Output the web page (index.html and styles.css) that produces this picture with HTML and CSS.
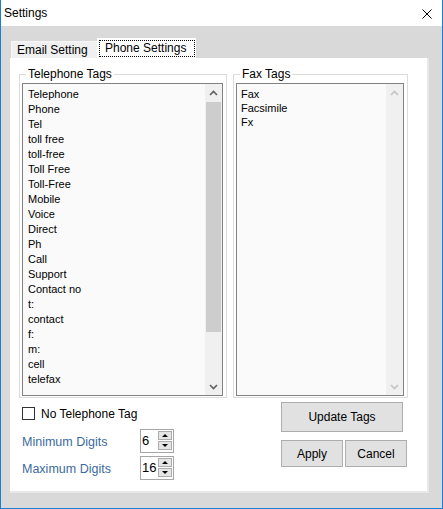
FILE: index.html
```html
<!DOCTYPE html>
<html>
<head>
<meta charset="utf-8">
<link rel="stylesheet" href="styles.css">
</head>
<body>
<div class="window">
  <div class="titlebar">
    <span class="title">Settings</span>
    <svg class="close" width="10" height="10" viewBox="0 0 10 10"><path d="M0.5 0.5 L9.5 9.5 M9.5 0.5 L0.5 9.5" stroke="#000" stroke-width="1" fill="none"/></svg>
  </div>
  <div class="client">
    <div class="tabs">
      <div class="tab">Email Setting</div>
      <div class="tab active"><span class="focus">Phone Settings</span></div>
    </div>
    <div class="panel">
      <div class="groups">
        <fieldset class="group g-tel">
          <legend>Telephone Tags</legend>
          <div class="listbox lb-tel">
            <ul class="items">
              <li>Telephone</li><li>Phone</li><li>Tel</li><li>toll free</li><li>toll-free</li>
              <li>Toll Free</li><li>Toll-Free</li><li>Mobile</li><li>Voice</li><li>Direct</li>
              <li>Ph</li><li>Call</li><li>Support</li><li>Contact no</li><li>t:</li>
              <li>contact</li><li>f:</li><li>m:</li><li>cell</li><li>telefax</li>
            </ul>
            <div class="vscroll">
              <div class="sarrow"><svg width="9" height="6" viewBox="0 0 9 6"><polyline points="1,5 4.5,1.5 8,5" fill="none" stroke="#606060" stroke-width="1.6"/></svg></div>
              <div class="track"><div class="thumb"></div></div>
              <div class="sarrow"><svg width="9" height="6" viewBox="0 0 9 6"><polyline points="1,1 4.5,4.5 8,1" fill="none" stroke="#606060" stroke-width="1.6"/></svg></div>
            </div>
          </div>
        </fieldset>
        <fieldset class="group g-fax">
          <legend>Fax Tags</legend>
          <div class="listbox lb-fax">
            <ul class="items">
              <li>Fax</li><li>Facsimile</li><li>Fx</li>
            </ul>
            <div class="vscroll">
              <div class="sarrow"><svg width="9" height="6" viewBox="0 0 9 6"><polyline points="1,5 4.5,1.5 8,5" fill="none" stroke="#c4c4c4" stroke-width="1.6"/></svg></div>
              <div class="track"></div>
              <div class="sarrow"><svg width="9" height="6" viewBox="0 0 9 6"><polyline points="1,1 4.5,4.5 8,1" fill="none" stroke="#c4c4c4" stroke-width="1.6"/></svg></div>
            </div>
          </div>
        </fieldset>
      </div>
      <div class="bottom">
        <div class="left">
          <label class="check-row"><span class="checkbox"></span><span class="check-label">No Telephone Tag</span></label>
          <div class="num-row first">
            <span class="num-label">Minimum Digits</span>
            <div class="numeric"><span class="num-value">6</span><div class="spin"><span class="sbtn"><i class="tri up"></i></span><span class="sbtn"><i class="tri down"></i></span></div></div>
          </div>
          <div class="num-row">
            <span class="num-label">Maximum Digits</span>
            <div class="numeric"><span class="num-value">16</span><div class="spin"><span class="sbtn"><i class="tri up"></i></span><span class="sbtn"><i class="tri down"></i></span></div></div>
          </div>
        </div>
        <div class="right">
          <button class="btn btn-update">Update Tags</button>
          <div class="btn-row">
            <button class="btn btn-small">Apply</button>
            <button class="btn btn-small">Cancel</button>
          </div>
        </div>
      </div>
    </div>
  </div>
</div>
</body>
</html>
```
FILE: styles.css
```css
* { box-sizing: border-box; }
html, body { margin: 0; padding: 0; }
body {
  font-family: "Liberation Sans", Arial, sans-serif;
  font-size: 12px;
  color: #000;
  background: #fff;
}
.window {
  width: 443px;
  height: 509px;
  border-left: 1px solid #1a7fd4;
  border-right: 1px solid #1a7fd4;
  border-bottom: 1px solid #1a7fd4;
  display: flex;
  flex-direction: column;
}
.titlebar {
  height: 26px;
  background: #fff;
  display: flex;
  align-items: center;
  justify-content: space-between;
  padding: 0 10px 0 3px;
}
.title { font-size: 12px; line-height: 14px; }
.close { display: block; margin-top: 1px; }

.client {
  flex: 1;
  background: #d9d9d9;
  padding: 12px 13px 15px 9px;
  display: flex;
  flex-direction: column;
}
.tabs {
  height: 20px;
  display: flex;
  align-items: flex-end;
  margin-left: 1px;
}
.tab {
  height: 17px;
  width: 86px;
  background: #f0f0f0;
  border-top: 1px solid #f7f7f7;
  border-left: 1px solid #f7f7f7;
  line-height: 17px;
  padding-left: 5px;
  white-space: nowrap;
}
.tab.active {
  height: 20px;
  width: 99px;
  background: #fff;
  border: none;
  padding: 2px 1px 1px 2px;
}
.focus {
  display: block;
  height: 17px;
  border: 1px dotted #000;
  line-height: 15px;
  padding-left: 5px;
}
.panel {
  width: 419px;
  height: 435px;
  background: #fff;
  border-right: 2px solid #e8e8e8;
  border-bottom: 2px solid #e8e8e8;
  padding: 9px 0 0 9px;
}
.groups {
  display: flex;
  gap: 6px;
  align-items: flex-start;
}
.group {
  margin: 0;
  border: 1px solid #dcdcdc;
  padding: 2px 3px 1px 2px;
  min-width: 0;
}
.group legend {
  font-size: 12px;
  line-height: 14px;
  padding: 0 2px;
  margin-left: 4px;
}
.listbox {
  height: 313px;
  border: 1px solid #828282;
  background: #fafafa;
  display: flex;
}
.lb-tel { width: 201px; }
.lb-fax { width: 168px; }
.items {
  list-style: none;
  margin: 0;
  padding: 3px 0 0 5px;
  flex: 1;
  font-size: 11px;
}
.lb-tel .items li { height: 15px; line-height: 15px; }
.lb-fax .items li { height: 14px; line-height: 14px; }
.lb-fax .items { padding-left: 4px; }
.vscroll {
  width: 17px;
  background: #f0f0f0;
  display: flex;
  flex-direction: column;
}
.sarrow {
  height: 17px;
  display: flex;
  align-items: center;
  justify-content: center;
}
.sarrow svg { display: block; }
.track { flex: 1; padding: 0 1px; }
.thumb {
  height: 230px;
  background: #cdcdcd;
  margin-top: 1px;
}
.bottom {
  display: grid;
  grid-template-columns: 262px auto;
}
.left {
  padding-left: 3px;
  margin-top: 9px;
}
.check-row {
  display: flex;
  align-items: center;
  height: 13px;
}
.checkbox {
  width: 13px;
  height: 13px;
  border: 1px solid #333;
  background: #fff;
}
.check-label { margin-left: 6px; line-height: 14px; }
.num-row {
  display: flex;
  align-items: center;
  margin-top: 3px;
}
.num-row.first { margin-top: 9px; }
.num-label {
  width: 118px;
  color: #3c6a9f;
  font-size: 12.5px;
  padding-top: 2px;
}
.numeric {
  width: 34px;
  height: 24px;
  border: 1px solid #a6a6a6;
  background: #fff;
  display: flex;
  justify-content: space-between;
}
.num-value {
  font-size: 13px;
  line-height: 22px;
  padding-left: 1px;
}
.spin {
  display: flex;
  flex-direction: column;
  gap: 1px;
  margin: 1px 1px 0 0;
}
.sbtn {
  width: 14px;
  height: 9px;
  background: #e5e5e5;
  border: 1px solid #acacac;
  display: flex;
  align-items: center;
  justify-content: center;
}
.tri {
  width: 0;
  height: 0;
  border-left: 3px solid transparent;
  border-right: 3px solid transparent;
}
.tri.up { border-bottom: 3px solid #000; }
.tri.down { border-top: 3px solid #000; }
.right {
  margin-top: 4px;
  display: flex;
  flex-direction: column;
  align-items: flex-start;
}
.btn {
  font-family: "Liberation Sans", Arial, sans-serif;
  font-size: 12px;
  color: #000;
  background: #e1e1e1;
  border: 1px solid #adadad;
  padding: 0;
  margin: 0;
}
.btn-update { width: 122px; height: 30px; }
.btn-row {
  display: flex;
  gap: 2px;
  margin-top: 8px;
}
.btn-small { width: 62px; height: 27px; }
```
